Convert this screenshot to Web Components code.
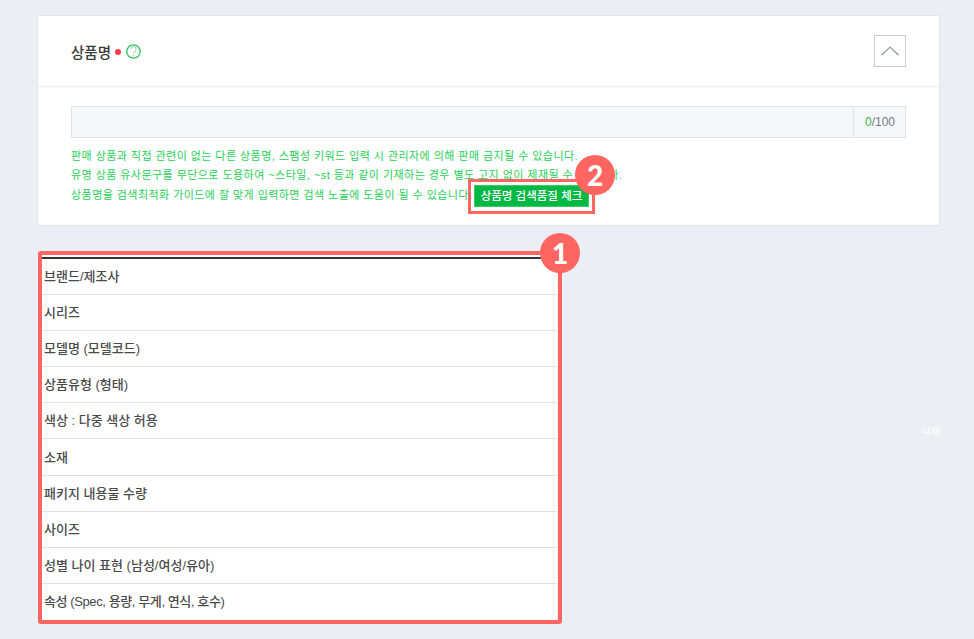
<!DOCTYPE html>
<html lang="ko">
<head>
<meta charset="utf-8">
<title>상품명</title>
<style>
    html, body { margin: 0; height: 100%; }
    body {
        background: #ebeef3;
        font-family: "Liberation Sans", "Noto Sans CJK KR", sans-serif;
        overflow: hidden;
    }
    #page {
        position: relative;
        padding: 15px 34px 0 37px;
    }
</style>
</head>
<body>
<div id="page">
    <name-panel heading="상품명" limit="100">
        <p>판매 상품과 직접 관련이 없는 다른 상품명, 스팸성 키워드 입력 시 관리자에 의해 판매 금지될 수 있습니다.</p>
        <p>유명 상품 유사문구를 무단으로 도용하여 ~스타일, ~st 등과 같이 기재하는 경우 별도 고지 없이 제재될 수 있습니다.</p>
        <p>상품명을 검색최적화 가이드에 잘 맞게 입력하면 검색 노출에 도움이 될 수 있습니다.</p>
    </name-panel>
    <attr-list>
        <attr-row>브랜드/제조사</attr-row>
        <attr-row>시리즈</attr-row>
        <attr-row>모델명 (모델코드)</attr-row>
        <attr-row>상품유형 (형태)</attr-row>
        <attr-row>색상 : 다중 색상 허용</attr-row>
        <attr-row>소재</attr-row>
        <attr-row>패키지 내용물 수량</attr-row>
        <attr-row>사이즈</attr-row>
        <attr-row>성별 나이 표현 (남성/여성/유아)</attr-row>
        <attr-row style="letter-spacing: -0.4px">속성 (Spec, 용량, 무게, 연식, 호수)</attr-row>
    </attr-list>
    <ghost-label></ghost-label>
</div>

<template id="name-panel-tpl">
    <style>
        :host {
            display: block;
            width: 903px;
            box-sizing: border-box;
            background: #fff;
            border: 1px solid #e3e5ea;
        }
        .head {
            display: flex;
            align-items: center;
            height: 71px;
            box-sizing: border-box;
            padding: 0 33px;
            border-bottom: 1px solid #e9ebf0;
        }
        h3 {
            margin: 0;
            font-size: 14.5px;
            font-weight: 500;
            color: #3a3a3a;
        }
        .dot {
            width: 6px;
            height: 6px;
            margin: 1px 0 0 4px;
            border-radius: 50%;
            background: #ff3d4f;
        }
        .help { margin: 1px 0 0 5px; display: block; }
        .toggle {
            margin-left: auto;
            width: 32px;
            height: 32px;
            box-sizing: border-box;
            border: 1px solid #c9cbd2;
            background: #fff;
            padding: 0;
            display: flex;
            align-items: center;
            justify-content: center;
        }
        .body { padding: 19px 33px 0; height: 119px; }
        .field {
            display: flex;
            height: 32px;
            box-sizing: border-box;
            background: #f6f7fb;
            border: 1px solid #e1e3e8;
        }
        .field input {
            flex: 1;
            min-width: 0;
            border: 0;
            background: none;
            outline: 0;
        }
        .count {
            width: 52px;
            box-sizing: border-box;
            border-left: 1px solid #e1e3e8;
            display: flex;
            align-items: center;
            justify-content: flex-end;
            padding-right: 10px;
            font-size: 12px;
            color: #777b85;
        }
        .count b { font-weight: 400; color: #3bb54f; }
        .notes {
            position: relative;
            margin-top: 9px;
            font-size: 11px;
            letter-spacing: 0.45px;
            line-height: 19.3px;
            color: #1fcf57;
        }
        ::slotted(p) { margin: 0; white-space: nowrap; }
        .check {
            position: absolute;
            left: 403px;
            top: 38px;
            width: 115px;
            height: 22px;
            box-sizing: border-box;
            border: 1px solid #35d060;
            background: #00b843;
            color: #fff;
            font: 500 11.5px/20px "Liberation Sans", "Noto Sans CJK KR", sans-serif;
            letter-spacing: 0;
            text-align: center;
            padding: 0;
        }
    </style>
    <div class="head">
        <h3></h3>
        <span class="dot"></span>
        <svg class="help" width="15" height="15" viewBox="0 0 15 15">
            <circle cx="7.5" cy="7.5" r="6.7" fill="#fff" stroke="#2fc65c" stroke-width="1.3"/>
            <path d="M4.9 5.3a2.6 2.6 0 1 1 4 2.2c-.9.6-1.4 1.1-1.4 2.1" fill="none" stroke="#a4d6b8" stroke-width="1.2"/>
            <circle cx="7.5" cy="11.5" r=".8" fill="#a4d6b8"/>
        </svg>
        <button class="toggle" aria-label="접기">
            <svg width="20" height="10" viewBox="0 0 20 10">
                <path d="M1.5 9 10 1.2 18.5 9" fill="none" stroke="#858a96" stroke-width="1.1"/>
            </svg>
        </button>
    </div>
    <div class="body">
        <div class="field">
            <input type="text" aria-label="상품명">
            <span class="count"><b>0</b>/<span class="limit"></span></span>
        </div>
        <div class="notes">
            <slot></slot>
            <button class="check">상품명 검색품질 체크</button>
            <mark-frame number="2" style="left: 397px; top: 32px; width: 127px; height: 35px; --line: 3px; --radius: 0; --right: -23px; --top: -27px;"></mark-frame>
        </div>
    </div>
</template>

<template id="attr-list-tpl">
    <style>
        :host {
            display: block;
            position: relative;
            width: 515px;
            margin: 29px 0 0 5px;
            background: #fff;
            padding-top: 2px;
        }
        .rows { border-top: 2px solid #333; }
    </style>
    <div class="rows"><slot></slot></div>
    <mark-frame number="1" style="left: -4px; top: -4px; width: 524px; height: 373px; --line: 4px; --radius: 3px; --right: -22px; --top: -22px;"></mark-frame>
</template>

<template id="attr-row-tpl">
    <style>
        :host {
            display: flex;
            align-items: center;
            height: 36.1px;
            box-sizing: border-box;
            padding: 0 2px 2px;
            border-bottom: 1px solid #e2e2e2;
            font-size: 13px;
            font-weight: 500;
            color: #4a4a4a;
        }
        :host(:last-child) { border-bottom: 0; }
    </style>
    <slot></slot>
</template>

<template id="mark-frame-tpl">
    <style>
        :host {
            position: absolute;
            display: block;
            box-sizing: border-box;
            border: var(--line) solid #ff6561;
            border-radius: var(--radius);
            pointer-events: none;
        }
        .num {
            position: absolute;
            right: var(--right);
            top: var(--top);
            width: 40px;
            height: 40px;
            border-radius: 50%;
            background: #ff6561;
            color: #fff;
            font: 900 28px/40px Lato, sans-serif;
            letter-spacing: 0;
            text-align: center;
        }
    </style>
    <span class="num"></span>
</template>

<template id="ghost-label-tpl">
    <style>
        :host {
            position: absolute;
            left: 921px;
            top: 424px;
            font-size: 10.5px;
            line-height: 14px;
            color: #fff;
        }
    </style>
    삭제
</template>

<script>
    function shadowFrom(el, id) {
        const root = el.attachShadow({ mode: 'open' });
        root.appendChild(document.getElementById(id).content.cloneNode(true));
        return root;
    }

    class NamePanel extends HTMLElement {
        constructor() {
            super();
            const root = shadowFrom(this, 'name-panel-tpl');
            root.querySelector('h3').textContent = this.getAttribute('heading');
            root.querySelector('.limit').textContent = this.getAttribute('limit');
        }
    }

    class AttrList extends HTMLElement {
        constructor() {
            super();
            shadowFrom(this, 'attr-list-tpl');
        }
    }

    class AttrRow extends HTMLElement {
        constructor() {
            super();
            shadowFrom(this, 'attr-row-tpl');
        }
    }

    class MarkFrame extends HTMLElement {
        constructor() {
            super();
            const root = shadowFrom(this, 'mark-frame-tpl');
            root.querySelector('.num').textContent = this.getAttribute('number');
        }
    }

    class GhostLabel extends HTMLElement {
        constructor() {
            super();
            shadowFrom(this, 'ghost-label-tpl');
        }
    }

    customElements.define('mark-frame', MarkFrame);
    customElements.define('attr-row', AttrRow);
    customElements.define('attr-list', AttrList);
    customElements.define('name-panel', NamePanel);
    customElements.define('ghost-label', GhostLabel);
</script>
</body>
</html>
